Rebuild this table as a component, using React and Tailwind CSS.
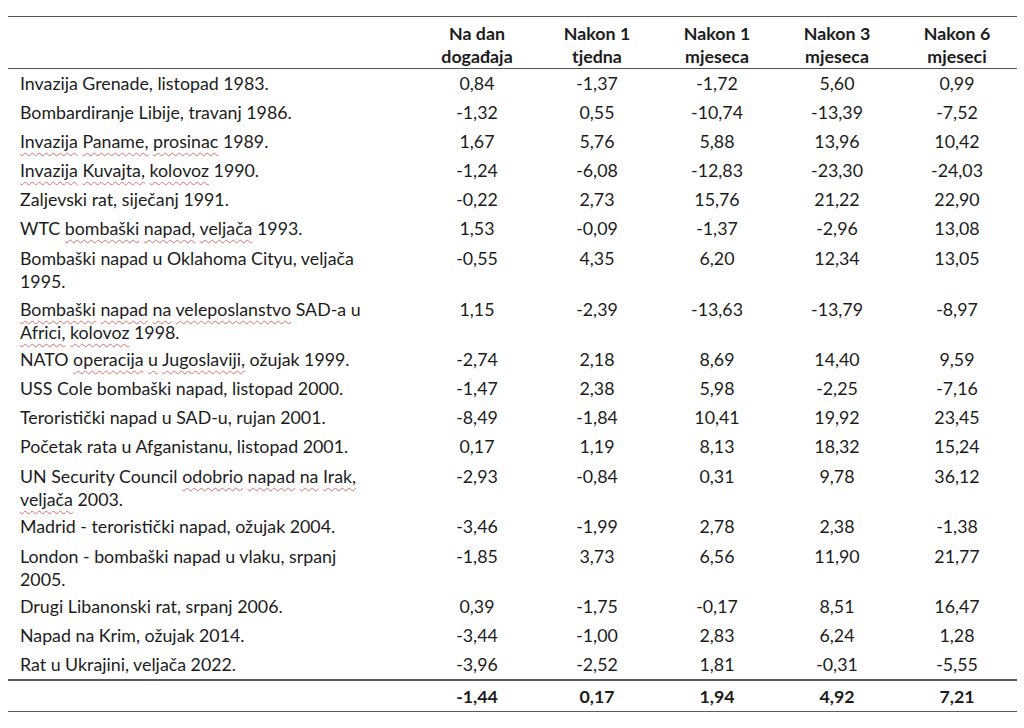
import React from 'react'

// ~word~ = spell-check squiggle, | = line break
const rows = [
    ['Invazija Grenade, listopad 1983.', '0,84', '-1,37', '-1,72', '5,60', '0,99'],
    ['Bombardiranje Libije, travanj 1986.', '-1,32', '0,55', '-10,74', '-13,39', '-7,52'],
    ['~Invazija~ ~Paname,~ ~prosinac~ 1989.', '1,67', '5,76', '5,88', '13,96', '10,42'],
    ['~Invazija~ ~Kuvajta,~ ~kolovoz~ 1990.', '-1,24', '-6,08', '-12,83', '-23,30', '-24,03'],
    ['Zaljevski rat, siječanj 1991.', '-0,22', '2,73', '15,76', '21,22', '22,90'],
    ['WTC ~bombaški~ ~napad,~ ~veljača~ 1993.', '1,53', '-0,09', '-1,37', '-2,96', '13,08'],
    ['Bombaški napad u Oklahoma Cityu, veljača|1995.', '-0,55', '4,35', '6,20', '12,34', '13,05'],
    ['~Bombaški~ ~napad~ ~na~ ~veleposlanstvo~ SAD-a u|~Africi,~ ~kolovoz~ 1998.', '1,15', '-2,39', '-13,63', '-13,79', '-8,97'],
    ['NATO ~operacija~ ~u~ ~Jugoslaviji,~ ožujak 1999.', '-2,74', '2,18', '8,69', '14,40', '9,59'],
    ['USS Cole bombaški napad, listopad 2000.', '-1,47', '2,38', '5,98', '-2,25', '-7,16'],
    ['Teroristički napad u SAD-u, rujan 2001.', '-8,49', '-1,84', '10,41', '19,92', '23,45'],
    ['Početak rata u Afganistanu, listopad 2001.', '0,17', '1,19', '8,13', '18,32', '15,24'],
    ['UN Security Council ~odobrio~ ~napad~ ~na~ ~Irak,~|~veljača~ 2003.', '-2,93', '-0,84', '0,31', '9,78', '36,12'],
    ['Madrid - teroristički napad, ožujak 2004.', '-3,46', '-1,99', '2,78', '2,38', '-1,38'],
    ['London - bombaški napad u vlaku, srpanj|2005.', '-1,85', '3,73', '6,56', '11,90', '21,77'],
    ['Drugi Libanonski rat, srpanj 2006.', '0,39', '-1,75', '-0,17', '8,51', '16,47'],
    ['Napad na Krim, ožujak 2014.', '-3,44', '-1,00', '2,83', '6,24', '1,28'],
    ['Rat u Ukrajini, veljača 2022.', '-3,96', '-2,52', '1,81', '-0,31', '-5,55'],
]

const headers = [['Na dan', 'događaja'], ['Nakon 1', 'tjedna'], ['Nakon 1', 'mjeseca'], ['Nakon 3', 'mjeseca'], ['Nakon 6', 'mjeseci']]
const totals = ['-1,44', '0,17', '1,94', '4,92', '7,21']

const gridCols = "grid grid-cols-[409px_repeat(5,120px)]"

const Label = ({text}) => {
    const lines = text.split('|')
    return lines.map((line, li) => (
        <div key={li} className="whitespace-nowrap">
            {line.split('~').map((part, i) => i % 2 === 1
                ? <span key={i} className="underline decoration-wavy decoration-[#e07070] decoration-1 underline-offset-[4px]">{part}</span>
                : <span key={i}>{part}</span>)}
        </div>
    ))
}

export default function App() {
    return <div className="bg-white min-h-screen pt-4 pl-2 text-[#1c1c1c] font-['Lato','Liberation_Sans',sans-serif] text-[17.8px]">
        <div className="w-[1009px]">
            <div className={`${gridCols} border-t border-b border-[#555] pt-[5px] font-bold leading-[23px]`}>
                <div></div>
                {headers.map((h, i) => <div key={i} className="text-center">
                    <div>{h[0]}</div>
                    <div>{h[1]}</div>
                </div>)}
            </div>
            {rows.map((r, i) => {
                const double = r[0].includes('|')
                return <div key={i} className={`${gridCols} leading-[23px] ${double ? 'pt-[4px] pb-[1px]' : 'py-[3px]'}`}>
                    <div className="pl-3"><Label text={r[0]}/></div>
                    {r.slice(1).map((v, j) => <div key={j} className="text-center">{v}</div>)}
                </div>
            })}
            <div className={`${gridCols} border-t-2 border-b border-[#5a5a5a] pt-[4px] pb-[3px] font-bold leading-[23px]`}>
                <div></div>
                {totals.map((v, j) => <div key={j} className="text-center">{v}</div>)}
            </div>
        </div>
    </div>
}
